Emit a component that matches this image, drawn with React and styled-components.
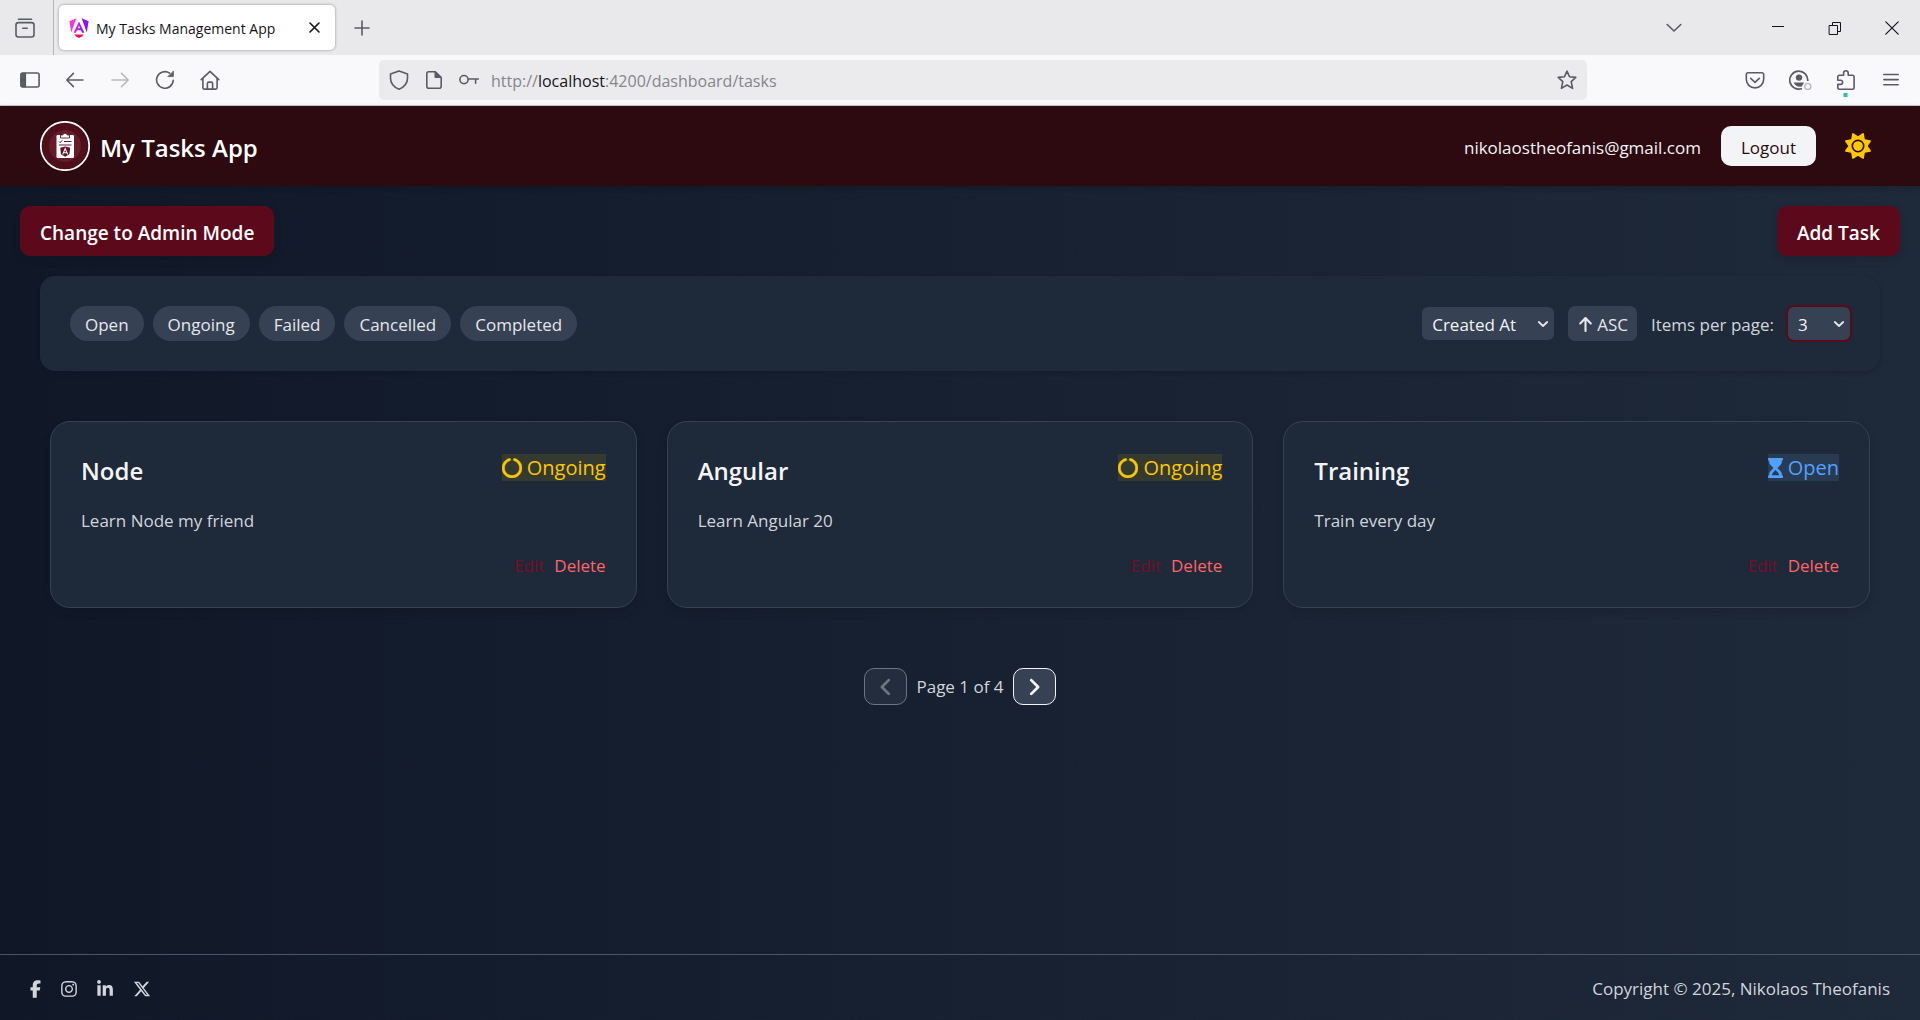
import React, { useState } from "react";
import styled, { createGlobalStyle, css } from "styled-components";
import {
  FaArrowUp,
  FaAngleLeft,
  FaAngleRight,
  FaCircleNotch,
  FaFacebookF,
  FaHourglassStart,
  FaInstagram,
  FaLinkedinIn,
  FaSun,
  FaXTwitter,
} from "react-icons/fa6";

const GlobalStyle = createGlobalStyle`
  *, *::before, *::after { box-sizing: border-box; }
  body {
    margin: 0;
    font-family: "Segoe UI", "Open Sans", "Noto Sans", sans-serif;
    font-size: 17px;
    line-height: 25px;
    color: #e5e7eb;
    background: #101828;
  }
  button, select, input { font: inherit; color: inherit; }
  button { cursor: pointer; }
  h1, h2, p, ul { margin: 0; padding: 0; }
  svg { display: block; flex: none; }
`;

const Window = styled.div`
  min-height: 100vh;
  display: flex;
  flex-direction: column;
`;

/* Browser chrome */

const TabStrip = styled.div`
  display: flex;
  align-items: stretch;
  height: 55px;
  background: #e9e9eb;
  color: #5b5b66;
`;

const PlainButton = styled.button`
  display: grid;
  place-items: center;
  padding: 0;
  border: 0;
  background: none;
  width: ${(p) => p.$width || 44}px;
  color: ${(p) => p.$color || "inherit"};
`;

const RecentSlot = styled.div`
  display: flex;
  width: 54px;
  padding-right: 4px;
  border-right: 1px solid #b4b4b9;
`;

const Tab = styled.div`
  display: flex;
  align-items: center;
  gap: 7px;
  width: 276px;
  margin: 5px;
  padding-left: 10px;
  border-radius: 5px;
  background: #fff;
  box-shadow: 0 0 3px rgba(0, 0, 0, 0.4);
  color: #15141a;
  font-size: 14px;
`;

const TabTitle = styled.span`
  flex: 1;
  padding-top: 2px;
  white-space: nowrap;
`;

const WindowControls = styled.div`
  display: flex;
  margin-left: auto;
  color: #15141a;
`;

const Toolbar = styled.div`
  display: flex;
  align-items: center;
  height: 51px;
  padding: 5px 7px;
  background: #f9f9fb;
  border-bottom: 1px solid #ccccd0;
  color: #5b5b66;
`;

const ToolGroup = styled.div`
  display: flex;
  align-items: center;
  flex: 1;
  justify-content: ${(p) => (p.$end ? "flex-end" : "flex-start")};
`;

const AddressBar = styled.div`
  display: flex;
  align-items: center;
  flex: 0 1 1208px;
  height: 40px;
  margin-left: 46px;
  border-radius: 5px;
  background: #ebebed;
`;

const AddressIcons = styled.div`
  display: flex;
  width: 112px;
  padding-left: 2px;
`;

const Address = styled.div`
  flex: 1;
  padding-top: 3px;
  font-size: 16px;
  color: #85858a;
  strong {
    font-weight: 400;
    color: #15141a;
  }
`;

/* Application */

const Header = styled.header`
  position: relative;
  display: flex;
  align-items: center;
  justify-content: space-between;
  min-height: 80px;
  padding: 0 40px;
  background: #2d0a10;
  box-shadow: 0 2px 6px rgba(0, 0, 0, 0.2);
`;

const Brand = styled.div`
  display: flex;
  align-items: center;
  gap: 10px;
`;

const BrandTitle = styled.h1`
  padding-top: 2px;
  font-size: 24px;
  line-height: 35px;
  font-weight: 600;
  color: #fff;
`;

const Account = styled.div`
  display: flex;
  align-items: center;
  gap: 20px;
  color: #f3f4f6;
`;

const Email = styled.span`
  padding-top: 2px;
`;

const LogoutButton = styled.button`
  height: 40px;
  padding: 2px 20px 0;
  border: 0;
  border-radius: 10px;
  background: #f3f4f6;
  color: #2d0a10;
`;

const Main = styled.main`
  flex: 1;
  display: flex;
  flex-direction: column;
  background: linear-gradient(to right, #101828, #1e2939);
`;

const Actions = styled.div`
  display: flex;
  justify-content: space-between;
  padding: 20px;
`;

const PrimaryButton = styled.button`
  height: 50px;
  padding: 4px 20px 0;
  border: 0;
  border-radius: 10px;
  background: #5c0a1b;
  color: #fff;
  font-size: 19px;
  font-weight: 600;
  box-shadow: 0 4px 8px rgba(0, 0, 0, 0.1);
`;

const Filters = styled.section`
  display: flex;
  align-items: center;
  justify-content: space-between;
  margin: 0 40px;
  padding: 30px;
  border-radius: 15px;
  background: #1e2939;
  box-shadow: 0 2px 4px rgba(0, 0, 0, 0.15);
`;

const FilterGroup = styled.div`
  display: flex;
  align-items: center;
  gap: ${(p) => p.$gap}px;
`;

const pill = css`
  height: 35px;
  border: 0;
  background: #364153;
  color: #e5e7eb;
`;

const Chip = styled.button`
  ${pill}
  padding: 1px 15px 0;
  border-radius: 18px;
`;

const SortButton = styled.button`
  ${pill}
  display: flex;
  align-items: center;
  gap: 3px;
  padding: 1px 9px 0;
  border-radius: 7px;
`;

const SelectBox = styled.div`
  display: grid;
  align-items: center;
  width: ${(p) => p.$width}px;
  > * {
    grid-area: 1 / 1;
  }
  svg {
    justify-self: end;
    margin-right: 5px;
    pointer-events: none;
  }
`;

const Select = styled.select`
  appearance: none;
  width: 100%;
  height: 33px;
  padding: 1px 10px 0;
  border: 0;
  border-radius: 6px;
  background: #364153;
  color: #f3f4f6;
  outline: none;
  box-shadow: ${(p) => (p.$ring ? "0 0 0 2px #5c0a1b" : "none")};
`;

const PageSizeLabel = styled.label`
  padding-top: 1px;
  color: #d1d5dc;
`;

const CardGrid = styled.section`
  display: grid;
  grid-template-columns: repeat(3, minmax(0, 1fr));
  gap: 30px;
  padding: 50px 50px 60px;
`;

const Card = styled.article`
  display: flex;
  flex-direction: column;
  padding: 32px 30px 29px;
  border: 1px solid #364153;
  border-radius: 20px;
  background: #1e2939;
  box-shadow: 0 4px 8px rgba(0, 0, 0, 0.1);
`;

const CardHead = styled.div`
  display: flex;
  justify-content: space-between;
  align-items: flex-start;
`;

const CardTitle = styled.h2`
  font-size: 24px;
  line-height: 33px;
  font-weight: 600;
  color: #f3f4f6;
`;

const Status = styled.span`
  display: flex;
  align-items: center;
  gap: 5px;
  padding-top: 1px;
  font-size: 20px;
  line-height: 26px;
  color: ${(p) => (p.$open ? "#51a2ff" : "#fcc800")};
  background: ${(p) => (p.$open ? "#283b52" : "#353a31")};
  svg {
    width: ${(p) => (p.$open ? 15 : 20)}px;
    height: 20px;
    stroke-width: 12px;
  }
`;

const CardText = styled.p`
  margin: 24px 0 22px;
  line-height: 20px;
  color: #d1d5dc;
`;

const CardActions = styled.div`
  display: flex;
  justify-content: flex-end;
  gap: 10px;
`;

const TextButton = styled.button`
  padding: 0;
  border: 0;
  background: none;
  color: ${(p) => (p.$danger ? "#ff6467" : "#750f27")};
`;

const Pagination = styled.nav`
  display: flex;
  align-items: center;
  justify-content: center;
  gap: 9px;
  color: #d1d5dc;
`;

const PageButton = styled.button`
  display: grid;
  place-items: center;
  width: 43px;
  height: 37px;
  padding: 0;
  border: 1px solid #f3f4f6;
  border-radius: 10px;
  background: #364153;
  color: #f3f4f6;
  &:disabled {
    opacity: 0.4;
  }
`;

const Footer = styled.footer`
  display: flex;
  align-items: center;
  justify-content: space-between;
  min-height: 66px;
  margin-top: auto;
  padding: 2px 30px 0;
  border-top: 1px solid #4a5565;
  color: #d1d5dc;
`;

const Socials = styled.div`
  display: flex;
  align-items: center;
  gap: 20px;
`;

const SocialLink = styled.a`
  color: inherit;
  svg {
    width: ${(p) => p.$width}px;
    height: 18px;
  }
`;

const Line = ({ size = 20, width = 1.6, box = 20, children, ...rest }) => (
  <svg
    width={size}
    height={size}
    viewBox={`0 0 ${box} ${box}`}
    fill="none"
    stroke="currentColor"
    strokeWidth={width}
    strokeLinecap="round"
    strokeLinejoin="round"
    aria-hidden="true"
    {...rest}
  >
    {children}
  </svg>
);

const RecentIcon = () => (
  <Line>
    <path d="M3.5 1.2h13" />
    <rect x="1" y="4.6" width="18" height="14.4" rx="2.4" />
    <path d="M7.8 10.2h4.4" />
  </Line>
);

const AngularIcon = () => (
  <svg width="20" height="20" viewBox="0 0 20 20" aria-hidden="true">
    <defs>
      <linearGradient id="ng" x1="0" y1="0" x2="1" y2="0.3">
        <stop offset="0" stopColor="#ff35c4" />
        <stop offset="0.5" stopColor="#c41ee8" />
        <stop offset="1" stopColor="#7a17ff" />
      </linearGradient>
    </defs>
    <path d="M0.4 3.3 7.4 0.3 2.2 14.6z" fill="#f637d3" />
    <path d="M12.6 0.3 19.6 3.3 17.8 14.6z" fill="#8514f5" />
    <path d="M10 3.6 4.6 14.8h2.3l1.1-2.6h4l1.1 2.6h2.3zM8.9 10.3 10 7.5l1.1 2.8z" fill="url(#ng)" fillRule="evenodd" />
    <path d="M5.4 16.4h9.2L13 18.6 10 20l-3-1.4z" fill="#fa0a5c" />
  </svg>
);

const SidebarIcon = () => (
  <Line>
    <rect x="0.9" y="3" width="18.2" height="14" rx="2" />
    <path d="M1.5 3.5h3.8v13H1.5z" fill="currentColor" />
  </Line>
);

const BackIcon = () => (
  <Line>
    <path d="M18 10H1.8M8.4 3.4 1.8 10l6.6 6.6" />
  </Line>
);

const ForwardIcon = () => (
  <Line>
    <path d="M2 10h16.2M11.6 3.4 18.2 10l-6.6 6.6" />
  </Line>
);

const ReloadIcon = () => (
  <Line>
    <path d="M18.2 10.2A8.3 8.3 0 1 1 14.6 3.1" />
    <path d="M18.4 1.4v5.2h-5.2z" fill="currentColor" strokeWidth="0.8" />
  </Line>
);

const HomeIcon = () => (
  <Line>
    <path d="M1.2 9.6 10 1.4l8.8 8.2M2.9 8.6v9.2c0 .8.5 1.3 1.3 1.3h11.6c.8 0 1.3-.5 1.3-1.3V8.6" />
    <path d="M7.4 19v-5.6c0-.8.5-1.3 1.3-1.3h2.6c.8 0 1.3.5 1.3 1.3V19" />
  </Line>
);

const ShieldIcon = () => (
  <Line>
    <path d="M10 .9 1.5 4v4.2C1.5 13.6 4.8 17 10 19.2c5.2-2.2 8.5-5.6 8.5-11V4z" />
  </Line>
);

const PageIcon = () => (
  <Line>
    <path d="M11 1.8H4.8c-1.2 0-2 .8-2 2v12.4c0 1.2.8 2 2 2h10.4c1.2 0 2-.8 2-2V7.6z" />
    <path d="M11.3 1.8v5.5h5.5z" fill="currentColor" />
  </Line>
);

const KeyIcon = () => (
  <Line>
    <circle cx="5" cy="9.6" r="4.1" />
    <path d="M9.2 9H19.4M16.6 9v4.2" />
  </Line>
);

const StarIcon = () => (
  <Line>
    <path d="M10 1.2l2.5 5.5 6.3.7-4.6 4.2 1.4 6.8L10 15l-5.6 3.4 1.4-6.800L1.2 7.4l6.3-.7z" />
  </Line>
);

const PocketIcon = () => (
  <Line>
    <path d="M3 2.8h14a1.7 1.7 0 0 1 1.7 1.7v4.7a8.7 8.7 0 0 1-17.4 0V4.5A1.7 1.7 0 0 1 3 2.8z" />
    <path d="M5.7 8.3 10 12.3l4.3-4" />
  </Line>
);

const AccountIcon = () => (
  <svg width="23" height="20" viewBox="0 0 23 20" fill="none" aria-hidden="true">
    <path d="M13 18.5A9 9 0 1 1 18.7 11" stroke="currentColor" strokeWidth="1.7" />
    <circle cx="10" cy="7.6" r="3.2" fill="currentColor" />
    <path d="M4.6 12.5h10.6l-1.7 2.5-.3 1.2c-3 1.2-6.6.4-8.6-3.7z" fill="currentColor" />
    <circle cx="18.8" cy="16.4" r="3" stroke="#b8b8bf" strokeWidth="1.4" />
  </svg>
);

const ExtensionIcon = () => (
  <svg width="20" height="34" viewBox="0 -7 20 34" fill="none" aria-hidden="true">
    <path
      d="M7.6 5.2V3a2.3 2.3 0 0 1 4.6 0v2.2h4.2c1 0 1.7.7 1.7 1.7v10.6c0 1-.7 1.7-1.7 1.7H3.5c-1 0-1.7-.7-1.7-1.7v-3.1h2.7a2.1 2.1 0 0 0 0-4.2H1.8V6.9c0-1 .7-1.7 1.7-1.7z"
      stroke="currentColor"
      strokeWidth="1.6"
      strokeLinejoin="round"
    />
    <path d="M7.5 23h4v4h-4z" fill="#2ac3a2" />
  </svg>
);

const MenuIcon = () => (
  <Line>
    <path d="M2.8 4.5h14.4M2.8 9.6h14.4M2.8 14.7h14.4" />
  </Line>
);

const PlusIcon = () => (
  <Line>
    <path d="M10 3v14M3 10h14" />
  </Line>
);

const CloseIcon = () => (
  <Line size={11} box={11}>
    <path d="M1 1l9 9M10 1l-9 9" />
  </Line>
);

const AllTabsIcon = () => (
  <Line size={16} box={16}>
    <path d="M1.2 4.5 8 11l6.8-6.5" />
  </Line>
);

const MinimizeIcon = () => (
  <Line size={14} box={14} width={1}>
    <path d="M1 5.5h12" strokeLinecap="butt" />
  </Line>
);

const RestoreIcon = () => (
  <Line size={14} box={14} width={1}>
    <path d="M1.5 4.5h8v9h-8zM4.5 4.5v-3h8v9h-3" />
  </Line>
);

const WindowCloseIcon = () => (
  <Line size={14} box={14} width={1.2}>
    <path d="M.8.8l12.4 12.4M13.2.8.8 13.2" />
  </Line>
);

const SelectArrow = () => (
  <Line size={12} box={12} width={1.8}>
    <path d="M1.8 4l4.2 4 4.2-4" />
  </Line>
);

const Logo = () => (
  <svg width="50" height="50" viewBox="0 0 50 50" aria-hidden="true">
    <circle cx="25" cy="25" r="24.2" fill="#4e0f1b" stroke="#fff" strokeWidth="1.7" />
    <circle cx="25" cy="25" r="16" fill="#651c28" />
    <rect x="16.5" y="14" width="17.5" height="23" rx="1.2" fill="#fff" />
    <path d="M20.5 17v-3h2.2a2.4 2.4 0 0 1 4.6 0h2.2v3z" fill="#fff" stroke="#651c28" strokeWidth="0.9" />
    <path d="M19 20.5l1.2 1.2 2-2.4M24 20.5h7.5M19 24h12.5" fill="none" stroke="#651c28" strokeWidth="1" />
    <path d="M20.2 26.7l5-1.3 5 1.3-.8 6.500-4.200 2.600-4.200-2.600z" fill="#5a1622" />
    <path d="M22.7 33.4l2.5-5.8 2.5 5.8M23.7 31.7h3" fill="none" stroke="#fff" strokeWidth="1.1" />
  </svg>
);

const statuses = ["Open", "Ongoing", "Failed", "Cancelled", "Completed"];

const tasks = [
  { title: "Node", text: "Learn Node my friend", status: "Ongoing" },
  { title: "Angular", text: "Learn Angular 20", status: "Ongoing" },
  { title: "Training", text: "Train every day", status: "Open" },
];

const TaskCard = ({ task }) => {
  const open = task.status === "Open";
  return (
    <Card>
      <CardHead>
        <CardTitle>{task.title}</CardTitle>
        <Status $open={open}>
          {open ? <FaHourglassStart /> : <FaCircleNotch />}
          {task.status}
        </Status>
      </CardHead>
      <CardText>{task.text}</CardText>
      <CardActions>
        <TextButton>Edit</TextButton>
        <TextButton $danger>Delete</TextButton>
      </CardActions>
    </Card>
  );
};

export default function App() {
  const [sort, setSort] = useState("Created At");
  const [size, setSize] = useState("3");
  return (
    <Window>
      <GlobalStyle />
      <TabStrip>
        <RecentSlot>
          <PlainButton $width={50} aria-label="Recent browsing"><RecentIcon /></PlainButton>
        </RecentSlot>
        <Tab>
          <AngularIcon />
          <TabTitle>My Tasks Management App</TabTitle>
          <PlainButton $width={42} aria-label="Close tab"><CloseIcon /></PlainButton>
        </Tab>
        <PlainButton aria-label="New tab"><PlusIcon /></PlainButton>
        <WindowControls>
          <PlainButton $width={152} $color="#5b5b66" aria-label="List all tabs"><AllTabsIcon /></PlainButton>
          <PlainButton $width={56} aria-label="Minimize"><MinimizeIcon /></PlainButton>
          <PlainButton $width={57} aria-label="Restore"><RestoreIcon /></PlainButton>
          <PlainButton $width={57} aria-label="Close window"><WindowCloseIcon /></PlainButton>
        </WindowControls>
      </TabStrip>
      <Toolbar>
        <ToolGroup>
          <PlainButton $width={45} aria-label="Sidebar"><SidebarIcon /></PlainButton>
          <PlainButton $width={45} aria-label="Back"><BackIcon /></PlainButton>
          <PlainButton $width={45} $color="#b8b8bf" aria-label="Forward"><ForwardIcon /></PlainButton>
          <PlainButton $width={45} aria-label="Reload"><ReloadIcon /></PlainButton>
          <PlainButton $width={45} aria-label="Home"><HomeIcon /></PlainButton>
        </ToolGroup>
        <AddressBar>
          <AddressIcons>
            <PlainButton $width={35} aria-label="Protection"><ShieldIcon /></PlainButton>
            <PlainButton $width={35} aria-label="Site information"><PageIcon /></PlainButton>
            <PlainButton $width={35} aria-label="Saved password"><KeyIcon /></PlainButton>
          </AddressIcons>
          <Address>http://<strong>localhost</strong>:4200/dashboard/tasks</Address>
          <PlainButton $width={40} aria-label="Bookmark"><StarIcon /></PlainButton>
        </AddressBar>
        <ToolGroup $end>
          <PlainButton $width={45} aria-label="Pocket"><PocketIcon /></PlainButton>
          <PlainButton $width={46} aria-label="Account"><AccountIcon /></PlainButton>
          <PlainButton $width={45} aria-label="Extensions"><ExtensionIcon /></PlainButton>
          <PlainButton $width={45} aria-label="Menu"><MenuIcon /></PlainButton>
        </ToolGroup>
      </Toolbar>

      <Header>
        <Brand>
          <Logo />
          <BrandTitle>My Tasks App</BrandTitle>
        </Brand>
        <Account>
          <Email>nikolaostheofanis@gmail.com</Email>
          <LogoutButton>Logout</LogoutButton>
          <PlainButton $color="#fcc800" aria-label="Toggle theme"><FaSun size={26} /></PlainButton>
        </Account>
      </Header>

      <Main>
        <Actions>
          <PrimaryButton>Change to Admin Mode</PrimaryButton>
          <PrimaryButton>Add Task</PrimaryButton>
        </Actions>

        <Filters>
          <FilterGroup $gap={9}>
            {statuses.map((s) => (
              <Chip key={s}>{s}</Chip>
            ))}
          </FilterGroup>
          <FilterGroup $gap={14}>
            <SelectBox $width={132}>
              <Select aria-label="Sort by" value={sort} onChange={(e) => setSort(e.target.value)}>
                <option>Created At</option>
              </Select>
              <SelectArrow />
            </SelectBox>
            <SortButton><FaArrowUp size={17} />ASC</SortButton>
            <PageSizeLabel htmlFor="page-size">Items per page:</PageSizeLabel>
            <SelectBox $width={62}>
              <Select id="page-size" $ring value={size} onChange={(e) => setSize(e.target.value)}>
                <option>3</option>
              </Select>
              <SelectArrow />
            </SelectBox>
          </FilterGroup>
        </Filters>

        <CardGrid>
          {tasks.map((t) => (
            <TaskCard key={t.title} task={t} />
          ))}
        </CardGrid>

        <Pagination aria-label="Pages">
          <PageButton disabled aria-label="Previous page"><FaAngleLeft size={22} /></PageButton>
          <span>Page 1 of 4</span>
          <PageButton aria-label="Next page"><FaAngleRight size={22} /></PageButton>
        </Pagination>

        <Footer>
          <Socials>
            <SocialLink $width={11} href="#facebook" aria-label="Facebook"><FaFacebookF /></SocialLink>
            <SocialLink $width={16} href="#instagram" aria-label="Instagram"><FaInstagram /></SocialLink>
            <SocialLink $width={16} href="#linkedin" aria-label="LinkedIn"><FaLinkedinIn /></SocialLink>
            <SocialLink $width={18} href="#x" aria-label="X"><FaXTwitter /></SocialLink>
          </Socials>
          <p>Copyright © 2025, Nikolaos Theofanis</p>
        </Footer>
      </Main>
    </Window>
  );
}
